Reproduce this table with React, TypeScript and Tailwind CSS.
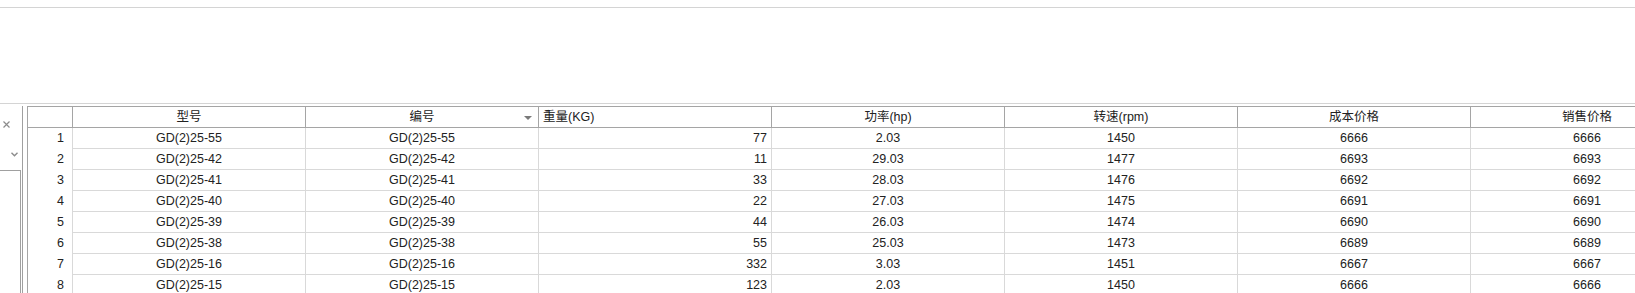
import React from "react";

type Row = {
  model: string;
  code: string;
  weight: string;
  power: string;
  speed: string;
  cost: string;
  price: string;
};

const rows: Row[] = [
  { model: "GD(2)25-55", code: "GD(2)25-55", weight: "77", power: "2.03", speed: "1450", cost: "6666", price: "6666" },
  { model: "GD(2)25-42", code: "GD(2)25-42", weight: "11", power: "29.03", speed: "1477", cost: "6693", price: "6693" },
  { model: "GD(2)25-41", code: "GD(2)25-41", weight: "33", power: "28.03", speed: "1476", cost: "6692", price: "6692" },
  { model: "GD(2)25-40", code: "GD(2)25-40", weight: "22", power: "27.03", speed: "1475", cost: "6691", price: "6691" },
  { model: "GD(2)25-39", code: "GD(2)25-39", weight: "44", power: "26.03", speed: "1474", cost: "6690", price: "6690" },
  { model: "GD(2)25-38", code: "GD(2)25-38", weight: "55", power: "25.03", speed: "1473", cost: "6689", price: "6689" },
  { model: "GD(2)25-16", code: "GD(2)25-16", weight: "332", power: "3.03", speed: "1451", cost: "6667", price: "6667" },
  { model: "GD(2)25-15", code: "GD(2)25-15", weight: "123", power: "2.03", speed: "1450", cost: "6666", price: "6666" },
];

const headCell =
  "flex h-[21px] items-center justify-center border-r border-b border-[#a5a5a5] whitespace-nowrap";
const dataCell =
  "flex h-[21px] items-center justify-center border-r border-b border-[#d9d9d9] whitespace-nowrap";

const LeftPanel = () => (
  <div className="flex h-full w-[23px] shrink-0 flex-col border-r border-[#a0a0a0]">
    <div className="flex h-[64px] flex-col">
      <div className="mt-[15px] ml-[3px] h-[7px] w-[7px]">
        <svg width="7" height="7" viewBox="0 0 7 7">
          <path d="M0.5 0.5 L6.5 6.5 M6.5 0.5 L0.5 6.5" stroke="#8c8c8c" strokeWidth="1.2" />
        </svg>
      </div>
      <div className="mt-[24px] ml-[11px] h-[5px] w-[7px]">
        <svg width="7" height="5" viewBox="0 0 7 5">
          <path d="M0.5 0.8 L3.5 3.8 L6.5 0.8" fill="none" stroke="#8c8c8c" strokeWidth="1.4" />
        </svg>
      </div>
    </div>
    <div className="flex-1 w-[21px] border-t border-r border-[#a0a0a0]" />
  </div>
);

const Grid = () => (
  <div
    className="grid self-start content-start border-t border-l border-[#a5a5a5] text-[#222]"
    style={{ gridTemplateColumns: "45px repeat(7, 233px)" }}
  >
    <div className={headCell} />
    <div className={headCell}>型号</div>
    <div className={`${headCell} relative`}>
      编号
      <svg className="absolute right-[6px] top-[9px]" width="8" height="4" viewBox="0 0 8 4">
        <path d="M0 0 L8 0 L4 4 Z" fill="#7a7a7a" />
      </svg>
    </div>
    <div className={`${headCell} justify-start pl-[4px]`}>重量(KG)</div>
    <div className={headCell}>功率(hp)</div>
    <div className={headCell}>转速(rpm)</div>
    <div className={headCell}>成本价格</div>
    <div className={headCell}>销售价格</div>

    {rows.map((r, i) => (
      <React.Fragment key={i}>
        <div className="flex h-[21px] items-center justify-end border-r border-[#d9d9d9] pr-[8px]">
          {i + 1}
        </div>
        <div className={dataCell}>{r.model}</div>
        <div className={dataCell}>{r.code}</div>
        <div className={`${dataCell} justify-end pr-[4px]`}>{r.weight}</div>
        <div className={dataCell}>{r.power}</div>
        <div className={dataCell}>{r.speed}</div>
        <div className={dataCell}>{r.cost}</div>
        <div className={dataCell}>{r.price}</div>
      </React.Fragment>
    ))}
  </div>
);

export default function App() {
  return (
    <div
      className="h-[293px] w-[1635px] overflow-hidden bg-white text-[12.5px]"
      style={{ fontFamily: '"Liberation Sans", "Noto Sans CJK SC", sans-serif' }}
    >
      <div className="h-[8px] border-b border-[#d4d4d4]" />
      <div className="h-[96px] border-b border-[#d4d4d4]" />
      <div className="mt-[2px] flex h-[200px] gap-[4px]">
        <LeftPanel />
        <Grid />
      </div>
    </div>
  );
}
